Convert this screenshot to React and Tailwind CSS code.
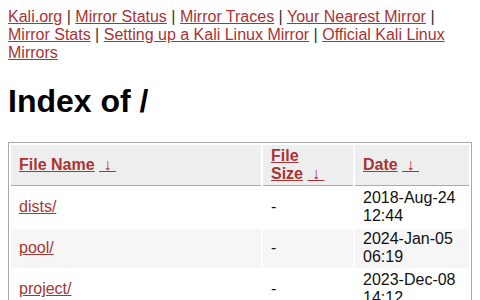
export default function App() {
  const rows = [
    { name: "dists/", size: "-", date: "2018-Aug-24 12:44", bg: "bg-white" },
    { name: "pool/", size: "-", date: "2024-Jan-05 06:19", bg: "bg-[#f6f6f6]" },
    { name: "project/", size: "-", date: "2023-Dec-08 14:12", bg: "bg-white" },
    { name: "README", size: "5.1 KiB", date: "2023-Jan-10 09:42", bg: "bg-[#f6f6f6]" },
  ];
  const link = "text-[#a33] underline";
  return (
    <div className="m-2 text-[16px] leading-[normal] text-[#333] font-['Liberation_Sans',Arial,sans-serif]">
      <div>
        <a className={link} href="#">Kali.org</a> | <a className={link} href="#">Mirror Status</a> |{" "}
        <a className={link} href="#">Mirror Traces</a> | <a className={link} href="#">Your Nearest Mirror</a> |{" "}
        <a className={link} href="#">Mirror Stats</a> | <a className={link} href="#">Setting up a Kali Linux Mirror</a> |{" "}
        <a className={link} href="#">Official Kali Linux Mirrors</a>
      </div>
      <h1 className="text-[32px] font-bold text-black my-[21.44px]">Index of /</h1>
      <table className="w-full table-fixed border border-[#aaa] border-separate border-spacing-[2px]">
        <thead>
          <tr className="bg-[#eee]">
            <th className="w-[250px] text-left font-bold px-2 py-[2px] border-b border-[#aaa]">
              <a className={link} href="#">File Name</a>&nbsp;<a className={link} href="#">&nbsp;↓&nbsp;</a>
            </th>
            <th className="w-[90px] text-left font-bold px-2 py-[2px] border-b border-[#aaa]">
              <a className={link} href="#">File Size</a>&nbsp;<a className={link} href="#">&nbsp;↓&nbsp;</a>
            </th>
            <th className="text-left font-bold px-2 py-[2px] border-b border-[#aaa]">
              <a className={link} href="#">Date</a>&nbsp;<a className={link} href="#">&nbsp;↓&nbsp;</a>
            </th>
          </tr>
        </thead>
        <tbody>
          {rows.map((r) => (
            <tr key={r.name}>
              <td className={`${r.bg} px-2 py-[1.5px]`}>
                <a className={link} href="#">{r.name}</a>
              </td>
              <td className={`${r.bg} px-2 py-[1.5px] text-[#111]`}>{r.size}</td>
              <td className={`${r.bg} px-2 py-[1.5px] text-[#111]`}>{r.date}</td>
            </tr>
          ))}
        </tbody>
      </table>
    </div>
  );
}
